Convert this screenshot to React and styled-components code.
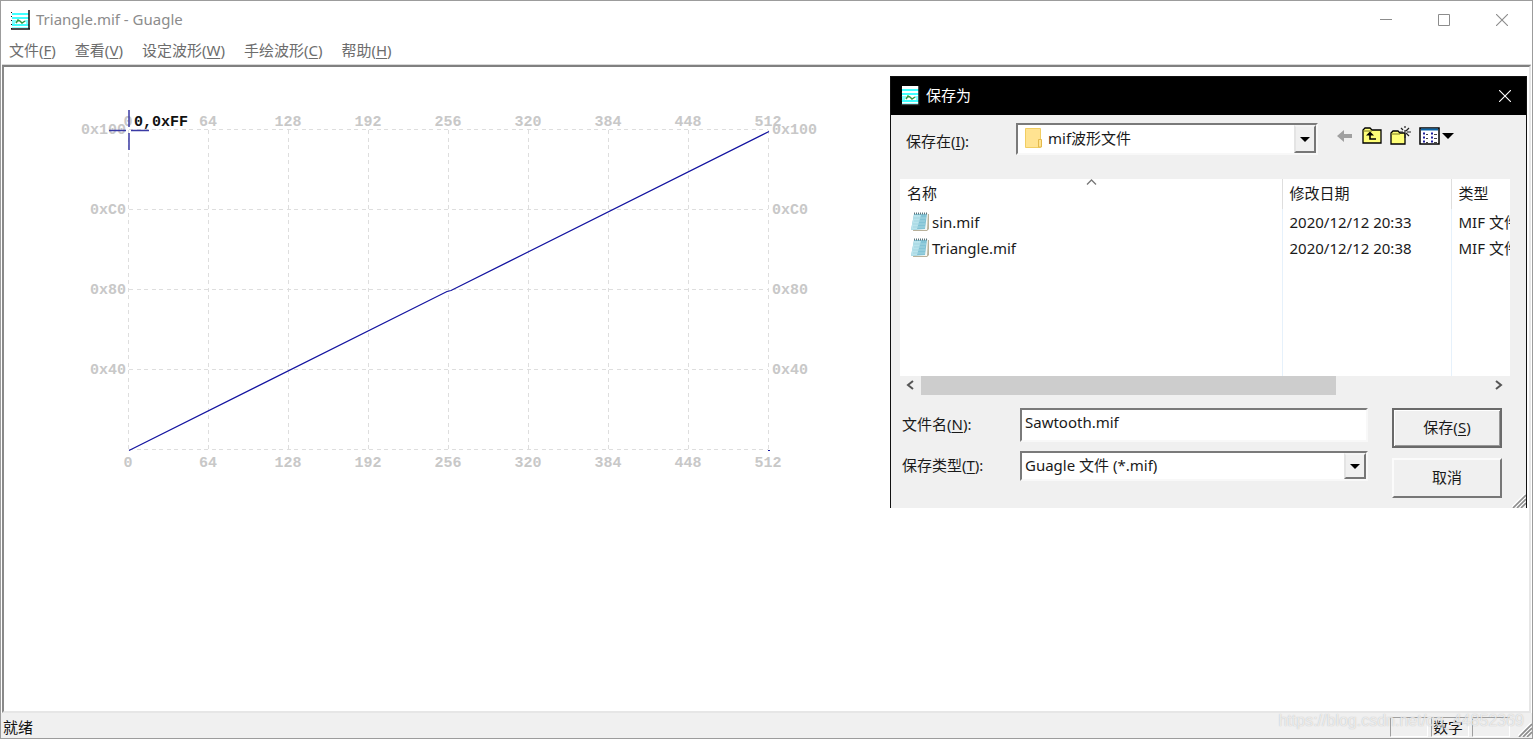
import React from "react";
import styled, { createGlobalStyle } from "styled-components";

const GlobalStyle = createGlobalStyle`
  * { box-sizing: border-box; }
  body {
    margin: 0;
    background: #fff;
    font-family: "Noto Sans", "Noto Sans CJK SC", sans-serif;
    font-size: 15px;
    line-height: 20px;
    color: #1a1a1a;
  }
  button, input, select { font: inherit; color: inherit; margin: 0; }
`;

const Window = styled.div`
  position: relative;
  display: flex;
  flex-direction: column;
  min-height: 100vh;
  overflow: hidden;
  background: #fff;
  border: 1px solid #9c9c9c;
`;

const TitleBar = styled.header`
  display: flex;
  align-items: center;
  height: 38px;
  padding: 0 10px 0 10px;
  color: #8c8c8c;
`;

const Title = styled.h1`
  flex: 1;
  margin: 0 0 0 6px;
  padding-bottom: 2px;
  font-size: 15px;
  line-height: 20px;
  font-weight: 400;
`;

const CaptionButton = styled.button`
  display: flex;
  align-items: center;
  justify-content: center;
  width: 40px;
  height: 28px;
  margin-left: ${(p) => (p.$tight ? "0" : "18px")};
  padding: 0;
  border: 0;
  background: none;
  color: inherit;
`;

const MenuBar = styled.nav`
  display: flex;
  align-items: center;
  gap: 19px;
  height: 26px;
  padding: 0 8px 4px;
  color: #6d6d6d;
`;

const MenuItem = styled.button`
  padding: 0;
  border: 0;
  background: none;
`;

const Key = styled.span`
  text-decoration: underline;
  text-underline-offset: 2px;
`;

const Canvas = styled.main`
  flex: 1;
  margin: 0 1px 0 1px;
  border: 2px solid;
  border-color: #808080 #e6e6e6 #e6e6e6 #8a8a8a;
  box-shadow: 0 -1px 0 #d8d8d8;
`;

const ChartSvg = styled.svg`
  display: block;
  font-family: "Liberation Mono", monospace;
  font-size: 15px;
  font-weight: 700;
`;

const StatusBar = styled.footer`
  position: relative;
  display: flex;
  align-items: stretch;
  gap: 3px;
  height: 25px;
  padding: 4px 0 1px 2px;
  background: #f0f0f0;
  color: #111;
`;

const StatusText = styled.span`
  flex: 1;
  line-height: 20px;
`;

const StatusPane = styled.span`
  width: 38px;
  padding-left: 1px;
  line-height: 18px;
  border: 1px solid;
  border-color: #a0a0a0 #fff #fff #a0a0a0;
`;

const GripSlot = styled.span`
  display: flex;
  align-items: flex-end;
  justify-content: flex-end;
  width: 19px;
`;

const TaskMarker = styled.span`
  position: absolute;
  left: 74%;
  bottom: -1px;
  width: 110px;
  height: 1px;
  background: #2f62b5;
`;

const Watermark = styled.span`
  position: absolute;
  right: 8px;
  bottom: 7px;
  font: 16px/20px "Liberation Sans", Arial, sans-serif;
  color: rgba(255, 255, 255, 0.7);
  text-shadow: 0 0 1px rgba(120, 120, 120, 0.5);
  pointer-events: none;
`;

const Dialog = styled.section`
  position: absolute;
  top: 75px;
  right: 5px;
  width: 637px;
  background: #f0f0f0;
  border: 1px solid #111;
  border-bottom: 0;
`;

const DialogTitleBar = styled.header`
  display: flex;
  align-items: center;
  height: 38px;
  padding: 0 1px 0 10px;
  background: #000;
  color: #fff;
`;

const DialogTitle = styled.h2`
  flex: 1;
  margin: 0 0 0 6px;
  padding-bottom: 2px;
  font-size: 15px;
  line-height: 20px;
  font-weight: 400;
`;

const LookInRow = styled.div`
  display: flex;
  align-items: flex-start;
  height: 64px;
  padding: 8px 16px 0 15px;
`;

const LookInLabel = styled.label`
  width: 110px;
  padding-top: 8px;
`;

const SelectFrame = styled.div`
  position: relative;
  display: flex;
  align-items: center;
  width: ${(p) => p.$width};
  height: ${(p) => p.$height};
  background: #fff;
  border: 2px solid;
  border-color: #7a7a7a #f8f8f8 #f8f8f8 #7a7a7a;
`;

const Select = styled.select`
  flex: 1;
  align-self: stretch;
  min-width: 0;
  padding: 0 0 2px ${(p) => p.$indent};
  border: 0;
  background: transparent;
  appearance: none;
`;

const FolderSlot = styled.span`
  position: absolute;
  left: 7px;
  top: 3px;
  display: flex;
  pointer-events: none;
`;

const DropArrow = styled.span`
  display: flex;
  align-items: center;
  justify-content: center;
  align-self: stretch;
  width: 22px;
  background: #f0f0f0;
  border: 2px solid;
  border-color: #f4f4f4 #777 #777 #e4e4e4;
  pointer-events: none;
`;

const Tools = styled.div`
  display: flex;
  align-items: center;
  gap: 8px;
  margin-left: 18px;
  padding-top: 3px;
`;

const ToolButton = styled.button`
  display: flex;
  padding: 0;
  border: 0;
  background: none;
`;

const FileArea = styled.div`
  margin: 0 16px 0 9px;
`;

const ListView = styled.div`
  height: 197px;
  overflow: hidden;
  background: #fff;
`;

const FileTable = styled.table`
  width: 100%;
  height: 197px;
  table-layout: fixed;
  border-collapse: collapse;
`;

const HeadCell = styled.th`
  position: relative;
  width: ${(p) => p.$width};
  height: 30px;
  padding: 0 0 2px 7px;
  font-weight: 400;
  text-align: left;
  white-space: nowrap;
  overflow: hidden;
  border-right: ${(p) => (p.$last ? "0" : "1px solid #dedede")};
`;

const Cell = styled.td`
  height: ${(p) => (p.$filler ? "auto" : "26px")};
  padding: 0 0 ${(p) => (p.$filler ? "0" : "1px")} 7px;
  white-space: nowrap;
  overflow: hidden;
  border-right: ${(p) => (p.$last ? "0" : "1px solid #e6f1fb")};
`;

const FileName = styled.span`
  display: flex;
  align-items: center;
  gap: 2px;
  padding-left: 3px;
`;

const SortMark = styled.svg`
  position: absolute;
  left: calc(50% - 5px);
  top: 0;
`;

const ScrollBar = styled.div`
  display: flex;
  align-items: center;
  height: 20px;
`;

const ScrollButton = styled.button`
  display: flex;
  align-items: center;
  justify-content: center;
  width: 21px;
  height: 19px;
  padding: 0 2px 2px 0;
  border: 0;
  background: none;
`;

const ScrollTrack = styled.div`
  flex: 1;
  height: 20px;
`;

const ScrollThumb = styled.div`
  width: 73%;
  height: 19px;
  background: #cdcdcd;
`;

const SaveForm = styled.form`
  display: flex;
  gap: 24px;
  padding: 12px 24px 10px 11px;
`;

const Fields = styled.div`
  display: flex;
  flex: 1;
  flex-direction: column;
  gap: 9px;
`;

const Field = styled.div`
  display: flex;
  align-items: center;
`;

const FieldLabel = styled.label`
  width: 118px;
  padding-bottom: 2px;
`;

const TextInput = styled.input`
  flex: 1;
  min-width: 0;
  height: 34px;
  padding: 0 3px 6px;
  background: #fff;
  border: 2px solid;
  border-color: #7a7a7a #f8f8f8 #f8f8f8 #7a7a7a;
  border-radius: 0;
  outline: 0;
`;

const Actions = styled.div`
  display: flex;
  flex-direction: column;
  gap: 10px;
  width: 110px;
`;

const PushButton = styled.button`
  height: 40px;
  padding: 0 0 2px;
  background: #f0f0f0;
  border: 2px solid;
  border-color: ${(p) => (p.$primary ? "#6a6a6a" : "#fbfbfb #777 #777 #fbfbfb")};
  box-shadow: ${(p) => (p.$primary ? "inset 1px 1px 0 #fff, inset -1px -1px 0 #999" : "none")};
`;

const CornerGrip = styled.span`
  position: absolute;
  right: 0;
  bottom: 0;
  display: flex;
`;

function WaveIcon() {
  return (
    <svg width="19" height="20" viewBox="0 0 19 20" aria-hidden="true">
      <path d="M1 0h17v19H1z" fill="#fff" />
      <path d="M1 4h17M1 8h17M1 15h17" stroke="#0ff" strokeWidth="1.500" />
      <path d="M1 17.500h17" stroke="#9ff" />
      <path d="M1 11h4M14 11h3M1 13h3M15 13h2" stroke="#0ff" />
      <path d="M5 13l2-3 2 1 2 2 3-2" stroke="#2f9a45" strokeWidth="1.500" fill="none" />
      <path d="M.5 2v17" stroke="#111" strokeDasharray="1 3" />
      <path d="M18 0v19M0 19h19" stroke="#111" strokeWidth="1.500" />
    </svg>
  );
}

function CloseGlyph() {
  return (
    <svg width="12" height="12" viewBox="0 0 12 12" aria-hidden="true">
      <path d="M0 0l12 12M12 0L0 12" stroke="currentColor" strokeWidth="1.1" />
    </svg>
  );
}

function Grip() {
  return (
    <svg width="14" height="14" viewBox="0 0 14 14" aria-hidden="true">
      <path d="M1 14L14 1M5 14l9-9M9 14l5-5" stroke="#fff" strokeWidth="1.5" transform="translate(-1 -1)" />
      <path d="M1 14L14 1M5 14l9-9M9 14l5-5" stroke="#8d8d8d" strokeWidth="1.6" />
    </svg>
  );
}

function Triangle() {
  return (
    <svg width="10" height="5" viewBox="0 0 10 5" aria-hidden="true">
      <path d="M0 0h10L5 5z" fill="#000" />
    </svg>
  );
}

function FolderIcon() {
  return (
    <svg width="17" height="21" viewBox="0 0 17 21" aria-hidden="true">
      <path d="M.5.5h15v19H.5z" fill="#ffe391" stroke="#f1cd62" />
      <path d="M13.500 11.500h3v7.500h-3z" fill="#ffe391" stroke="#e3b94c" />
    </svg>
  );
}

function NotepadIcon() {
  return (
    <svg width="20" height="20" viewBox="0 0 20 20" aria-hidden="true">
      <path d="M5 2h14v15l-2 2H3z" fill="#b9b19a" />
      <path d="M4 1h14l-1 17H2z" fill="#f6f8f4" />
      <path d="M4 2h13l-2 15-14 1z" fill="#82c3d5" />
      <path d="M4 3h7L7 17l-6 1z" fill="#b9e3ec" />
      <path d="M4 6h12M4 9h11M3 12h12M3 15h12" stroke="#a3d5e1" strokeWidth="1" />
      <path d="M4 1.500h14" stroke="#5d7680" strokeWidth="2" strokeDasharray="1 1" />
    </svg>
  );
}

const KEYS = [0, 1, 2, 3, 4, 5, 6, 7, 8];
const LEVELS = ["0x100", "0xC0", "0x80", "0x40"];

function Chart() {
  return (
    <ChartSvg width="840" height="420" viewBox="4 67 840 420" role="img" aria-label="波形">
      <g stroke="#dedede" strokeWidth="1" strokeDasharray="4 4 4 3" shapeRendering="crispEdges">
        {KEYS.map((i) => (
          <line key={i} x1={128.5 + i * 80} x2={128.5 + i * 80} y1="130" y2="450" />
        ))}
        {[0, 1, 2, 3, 4].map((i) => (
          <line key={i} x1="129" x2="768" y1={129.5 + i * 80} y2={129.5 + i * 80} />
        ))}
      </g>
      <g fill="#c8c8c8">
        {KEYS.map((i) => (
          <g key={i} textAnchor="middle">
            <text x={128 + i * 80} y="126">{i * 64}</text>
            <text x={128 + i * 80} y="467">{i * 64}</text>
          </g>
        ))}
        {LEVELS.map((level, i) => (
          <g key={level}>
            <text x="126" y={134 + i * 80} textAnchor="end">{level}</text>
            <text x="772" y={134 + i * 80}>{level}</text>
          </g>
        ))}
      </g>
      <path d="M129 450.500L447 291.500L451 290.500L769 131.500" stroke="#1414a0" strokeWidth="1.200" fill="none" />
      <path d="M768 450.500h2" stroke="#1414a0" />
      <path
        d="M129 110v17M129 133v17M109 130.500h17M131 130.500h18"
        stroke="#3a3aa4"
        strokeWidth="1.500"
      />
      <text x="134" y="126" fill="#111">0,0xFF</text>
    </ChartSvg>
  );
}

const MENUS = [
  ["文件", "F"],
  ["查看", "V"],
  ["设定波形", "W"],
  ["手绘波形", "C"],
  ["帮助", "H"],
];

const FILES = [
  ["sin.mif", "2020/12/12 20:33"],
  ["Triangle.mif", "2020/12/12 20:38"],
];

function SaveDialog() {
  return (
    <Dialog role="dialog" aria-labelledby="dialog-title">
      <DialogTitleBar>
        <WaveIcon />
        <DialogTitle id="dialog-title">保存为</DialogTitle>
        <CaptionButton $tight aria-label="关闭"><CloseGlyph /></CaptionButton>
      </DialogTitleBar>
      <LookInRow>
        <LookInLabel htmlFor="look-in">保存在(<Key>I</Key>):</LookInLabel>
        <SelectFrame $width="302px" $height="32px">
          <FolderSlot><FolderIcon /></FolderSlot>
          <Select id="look-in" $indent="30px">
            <option>mif波形文件</option>
          </Select>
          <DropArrow><Triangle /></DropArrow>
        </SelectFrame>
        <Tools>
          <ToolButton aria-label="后退">
            <svg width="18" height="20" viewBox="0 0 18 20" aria-hidden="true">
              <path d="M1 10l7-6v4h8v4H8v4z" fill="#a0a0a0" />
            </svg>
          </ToolButton>
          <ToolButton aria-label="向上一级">
            <svg width="20" height="20" viewBox="0 0 20 20" aria-hidden="true">
              <path d="M1 17V4l2-2h5l2 2h9v13z" fill="#ffff78" stroke="#000" strokeWidth="1.300" />
              <path d="M1 5h9" stroke="#7a7a20" />
              <path d="M8 7v6h6" fill="none" stroke="#000" strokeWidth="1.600" />
              <path d="M4 9.500l4-4 4 4z" fill="#000" />
            </svg>
          </ToolButton>
          <ToolButton aria-label="新建文件夹">
            <svg width="21" height="20" viewBox="0 0 21 20" aria-hidden="true">
              <path d="M1 18V7l2-2h5l2 2h5v11z" fill="#ffff78" stroke="#000" strokeWidth="1.300" />
              <path d="M1 8h9" stroke="#7a7a20" />
              <path d="M15 0v2M15 4v2M15 8v4M10 6h3M17 6h4M11 2l2 2M19 2l-3 3M19 10l-3-3" stroke="#222" strokeWidth="1.200" />
            </svg>
          </ToolButton>
          <ToolButton aria-label="查看菜单">
            <svg width="35" height="20" viewBox="0 0 35 20" aria-hidden="true">
              <path d="M1 2h19v16H1z" fill="#fff" stroke="#000" strokeWidth="1.500" />
              <path d="M2 3.500h17" stroke="#0a64a6" strokeWidth="2" />
              <path d="M4 7.500h2M4 11.500h2M4 15.500h2M12 7.500h2M12 11.500h2M12 15.500h2" stroke="#20209c" strokeWidth="2" />
              <path d="M7 8.500h2M7 12.500h2M7 16.500h2M15 8.500h3M15 12.500h3M15 16.500h3" stroke="#444" />
              <path d="M23 7h12l-6 6z" fill="#000" />
            </svg>
          </ToolButton>
        </Tools>
      </LookInRow>
      <FileArea>
        <ListView>
          <FileTable>
            <thead>
              <tr>
                <HeadCell $width="382px">
                  名称
                  <SortMark width="11" height="6" viewBox="0 0 11 6" aria-hidden="true">
                    <path d="M1 5.500L5.500 1L10 5.500" fill="none" stroke="#777" strokeWidth="1.300" />
                  </SortMark>
                </HeadCell>
                <HeadCell $width="169px">修改日期</HeadCell>
                <HeadCell $last>类型</HeadCell>
              </tr>
            </thead>
            <tbody>
              {FILES.map(([name, date]) => (
                <tr key={name}>
                  <Cell><FileName><NotepadIcon />{name}</FileName></Cell>
                  <Cell>{date}</Cell>
                  <Cell $last>MIF 文件</Cell>
                </tr>
              ))}
              <tr>
                <Cell $filler />
                <Cell $filler />
                <Cell $filler $last />
              </tr>
            </tbody>
          </FileTable>
        </ListView>
        <ScrollBar>
          <ScrollButton aria-label="向左滚动">
            <svg width="8" height="10" viewBox="0 0 8 10"><path d="M7 1L2 5l5 4" fill="none" stroke="#555" strokeWidth="2" /></svg>
          </ScrollButton>
          <ScrollTrack><ScrollThumb /></ScrollTrack>
          <ScrollButton aria-label="向右滚动">
            <svg width="8" height="10" viewBox="0 0 8 10"><path d="M1 1l5 4-5 4" fill="none" stroke="#555" strokeWidth="2" /></svg>
          </ScrollButton>
        </ScrollBar>
      </FileArea>
      <SaveForm onSubmit={(e) => e.preventDefault()}>
        <Fields>
          <Field>
            <FieldLabel htmlFor="file-name">文件名(<Key>N</Key>):</FieldLabel>
            <TextInput id="file-name" defaultValue="Sawtooth.mif" />
          </Field>
          <Field>
            <FieldLabel htmlFor="file-type">保存类型(<Key>T</Key>):</FieldLabel>
            <SelectFrame $width="348px" $height="30px">
              <Select id="file-type" $indent="3px">
                <option>Guagle 文件 (*.mif)</option>
              </Select>
              <DropArrow><Triangle /></DropArrow>
            </SelectFrame>
          </Field>
        </Fields>
        <Actions>
          <PushButton type="submit" $primary>保存(<Key>S</Key>)</PushButton>
          <PushButton type="button">取消</PushButton>
        </Actions>
      </SaveForm>
      <CornerGrip><Grip /></CornerGrip>
    </Dialog>
  );
}

export default function App() {
  return (
    <Window>
      <GlobalStyle />
      <TitleBar>
        <WaveIcon />
        <Title>Triangle.mif - Guagle</Title>
        <CaptionButton aria-label="最小化">
          <svg width="12" height="12" viewBox="0 0 12 12"><path d="M0 5.500h12" stroke="currentColor" /></svg>
        </CaptionButton>
        <CaptionButton aria-label="最大化">
          <svg width="12" height="12" viewBox="0 0 12 12"><path d="M.5.5h11v11H.5z" fill="none" stroke="currentColor" /></svg>
        </CaptionButton>
        <CaptionButton aria-label="关闭"><CloseGlyph /></CaptionButton>
      </TitleBar>
      <MenuBar>
        {MENUS.map(([label, key]) => (
          <MenuItem key={key}>{label}(<Key>{key}</Key>)</MenuItem>
        ))}
      </MenuBar>
      <Canvas>
        <Chart />
      </Canvas>
      <StatusBar>
        <StatusText>就绪</StatusText>
        <StatusPane />
        <StatusPane>数字</StatusPane>
        <StatusPane />
        <GripSlot><Grip /></GripSlot>
        <TaskMarker />
        <Watermark>https://blog.csdn.net/qq_44852369</Watermark>
      </StatusBar>
      <SaveDialog />
    </Window>
  );
}
